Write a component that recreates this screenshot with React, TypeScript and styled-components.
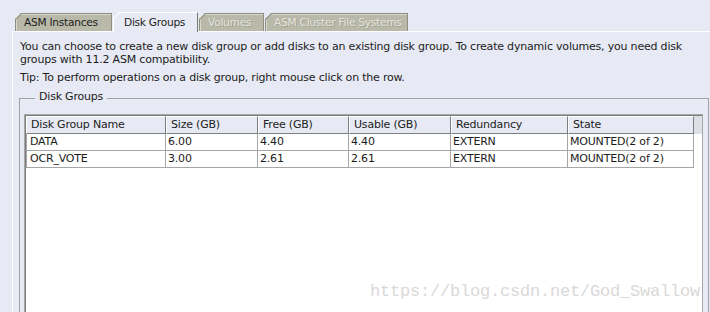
import React from 'react';
import styled, { createGlobalStyle } from 'styled-components';

const GlobalStyle = createGlobalStyle`
  html, body {
    margin: 0;
    padding: 0;
    background: #e7eaf4;
  }
`;

const Page = styled.div`
  position: relative;
  width: 710px;
  height: 312px;
  overflow: hidden;
  background: #e7eaf4;
  font-family: "DejaVu Sans", "Liberation Sans", sans-serif;
  font-size: 11px;
  letter-spacing: -0.2px;
  color: #1c1c1c;
`;

const TabStrip = styled.div`
  display: flex;
  align-items: flex-end;
  gap: 1px;
  height: 32px;
  padding-left: 15px;
  box-sizing: border-box;
  margin-bottom: -1px;
  position: relative;
  z-index: 1;
`;

const Tab = styled.div<{ w: number; selected?: boolean; disabled?: boolean }>`
  position: relative;
  box-sizing: border-box;
  width: ${p => p.w}px;
  height: ${p => (p.selected ? 20 : 18)}px;
  margin-bottom: ${p => (p.selected ? 0 : 1)}px;
  padding-left: ${p => (p.selected ? 10 : 8)}px;
  line-height: ${p => (p.selected ? 19 : 17)}px;
  font-size: 10.6px;
  letter-spacing: -0.25px;
  white-space: nowrap;
  overflow: hidden;
  background: ${p => (p.selected ? '#e7eaf4' : '#b9b9a9')};
  border-top: 1px solid ${p => (p.selected ? '#ffffff' : '#8d8d80')};
  border-left: 1px solid ${p => (p.selected ? '#ffffff' : '#8d8d80')};
  border-right: 1px solid ${p => (p.selected ? '#7a7a70' : '#8d8d80')};
  box-shadow: ${p => (p.selected ? 'none' : 'inset 1px 1px 0 #d8d8cc')};
  clip-path: polygon(6px 0, 100% 0, 100% 100%, 0 100%, 0 6px);
  color: ${p => (p.disabled ? '#e4e4dc' : '#1c1c1c')};
  text-shadow: ${p => (p.disabled ? '1px 1px 0 #a3a395' : 'none')};

  &::before {
    content: '';
    position: absolute;
    left: -2px;
    top: 2px;
    width: 9px;
    height: 1px;
    background: ${p => (p.selected ? '#ffffff' : '#8d8d80')};
    transform: rotate(-45deg);
  }
`;

const Panel = styled.div`
  margin-left: 12px;
  height: 281px;
  box-sizing: border-box;
  border-top: 1px solid #ffffff;
  border-left: 1px solid #ffffff;
  padding: 8px 0 0 7px;
  display: flex;
  flex-direction: column;
`;

const Note = styled.p<{ gap?: number }>`
  margin: 0 0 ${p => p.gap ?? 0}px 0;
  line-height: 13px;
  width: 694px;
`;

const Group = styled.fieldset`
  margin: 0 1px 0 -1px;
  padding: 0 5px 0 4px;
  border: 1px solid #a3a3a3;
  border-bottom: none;
  flex: 1;
  min-width: 0;
`;

const GroupTitle = styled.legend`
  margin-left: 11px;
  padding: 0 4px 4px 4px;
  line-height: 13px;
`;

const ScrollPane = styled.div`
  margin-top: 7px;
  height: 220px;
  background: #ffffff;
  border: 1px solid #a8a8a8;
  box-shadow: inset 1px 1px 0 #7c7c7c;
  padding: 1px 0 0 1px;
  box-sizing: border-box;
`;

const cols = '140px 92px 91px 102px 117px 126px';

const HeaderBar = styled.div`
  background: #dedfe4;
  height: 18px;
`;

const HeaderRow = styled.div`
  display: grid;
  grid-template-columns: ${cols};
  width: 668px;
`;

const HeadCell = styled.div`
  box-sizing: border-box;
  height: 18px;
  line-height: 16px;
  padding-left: 4px;
  background: #e7eaf4;
  border-top: 1px solid #ffffff;
  border-left: 1px solid #ffffff;
  border-right: 1px solid #7e7e7e;
  border-bottom: 1px solid #7e7e7e;
  white-space: nowrap;
`;

const Row = styled.div`
  display: grid;
  grid-template-columns: ${cols};
  width: 668px;
`;

const Cell = styled.div<{ first?: boolean }>`
  box-sizing: border-box;
  height: 17px;
  line-height: 16px;
  padding-left: ${p => (p.first ? 3 : 2)}px;
  border-right: 1px solid #a6a6a6;
  border-bottom: 1px solid #a6a6a6;
  border-left: ${p => (p.first ? '1px solid #a6a6a6' : 'none')};
  white-space: nowrap;
`;

const Watermark = styled.div`
  position: absolute;
  right: 10px;
  top: 282px;
  font-family: "Liberation Mono", monospace;
  font-size: 17px;
  color: #d9d9d9;
  letter-spacing: -0.2px;
  pointer-events: none;
`;

const headers = ['Disk Group Name', 'Size (GB)', 'Free (GB)', 'Usable (GB)', 'Redundancy', 'State'];

const rows = [
  ['DATA', '6.00', '4.40', '4.40', 'EXTERN', 'MOUNTED(2 of 2)'],
  ['OCR_VOTE', '3.00', '2.61', '2.61', 'EXTERN', 'MOUNTED(2 of 2)'],
];

export default function App() {
  return (
    <Page>
      <GlobalStyle />
      <TabStrip>
        <Tab w={97}>ASM Instances</Tab>
        <Tab w={85} selected>Disk Groups</Tab>
        <Tab w={65} disabled>Volumes</Tab>
        <Tab w={143} disabled>ASM Cluster File Systems</Tab>
      </TabStrip>
      <Panel>
        <Note gap={5}>
          You can choose to create a new disk group or add disks to an existing disk group. To create dynamic volumes, you need disk
          <br />
          groups with 11.2 ASM compatibility.
        </Note>
        <Note gap={6}>Tip: To perform operations on a disk group, right mouse click on the row.</Note>
        <Group>
          <GroupTitle>Disk Groups</GroupTitle>
          <ScrollPane>
            <HeaderBar>
              <HeaderRow>
                {headers.map(h => (
                  <HeadCell key={h}>{h}</HeadCell>
                ))}
              </HeaderRow>
            </HeaderBar>
            {rows.map(r => (
              <Row key={r[0]}>
                {r.map((c, i) => (
                  <Cell key={i} first={i === 0}>{c}</Cell>
                ))}
              </Row>
            ))}
          </ScrollPane>
        </Group>
      </Panel>
      <Watermark>https://blog.csdn.net/God_Swallow</Watermark>
    </Page>
  );
}
